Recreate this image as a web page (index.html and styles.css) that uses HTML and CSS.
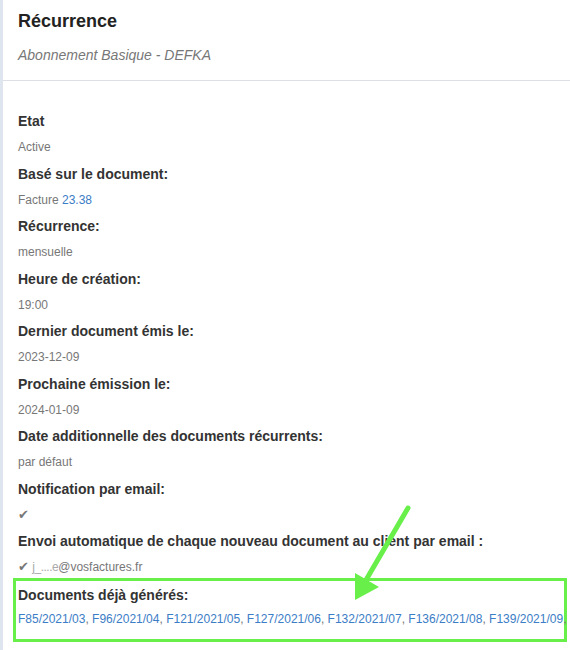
FILE: index.html
```html
<!DOCTYPE html>
<html lang="fr">
<head>
  <meta charset="UTF-8" />
  <title>Récurrence</title>
  <link rel="stylesheet" href="styles.css">
</head>
<body>
  <div class="panel">
    <div class="panel-header">
      <h2>Récurrence</h2>
      <p class="subtitle">Abonnement Basique - DEFKA</p>
    </div>

    <dl class="details">
      <dt>Etat</dt>
      <dd>Active</dd>
      <dt>Basé sur le document:</dt>
      <dd>Facture <a href="#">23.38</a></dd>
      <dt>Récurrence:</dt>
      <dd>mensuelle</dd>
      <dt>Heure de création:</dt>
      <dd>19:00</dd>
      <dt>Dernier document émis le:</dt>
      <dd>2023-12-09</dd>
      <dt>Prochaine émission le:</dt>
      <dd>2024-01-09</dd>
      <dt>Date additionnelle des documents récurrents:</dt>
      <dd>par défaut</dd>
      <dt>Notification par email:</dt>
      <dd><span class="check">&#10004;</span></dd>
      <dt>Envoi automatique de chaque nouveau document au client par email :</dt>
      <dd><span class="check">&#10004;</span> <span class="masked">j_....e</span>@vosfactures.fr</dd>
      <div class="highlight">
        <dt>Documents déjà générés:</dt>
        <dd class="doc-list">
          <a href="#">F85/2021/03</a>, <a href="#">F96/2021/04</a>, <a href="#">F121/2021/05</a>, <a href="#">F127/2021/06</a>, <a href="#">F132/2021/07</a>, <a href="#">F136/2021/08</a>, <a href="#">F139/2021/09</a>,
        </dd>
      </div>
    </dl>
  </div>

  <!-- annotation arrow -->
  <svg class="arrow" width="570" height="650" viewBox="0 0 570 650">
    <line x1="408" y1="508" x2="366" y2="580" stroke="#68ef4a" stroke-width="5" stroke-linecap="round"/>
    <polygon points="355,600 355,573 379,587" fill="#68ef4a"/>
  </svg>
</body>
</html>
```

FILE: styles.css
```css
body {
  margin: 0;
  padding: 0;
  font-family: "Liberation Sans", Arial, Helvetica, sans-serif;
  background: #ffffff;
  position: relative;
  width: 570px;
  height: 650px;
  overflow: hidden;
}

.panel {
  border-left: 3px solid #dfe5ee;
  min-height: 650px;
}

.panel-header {
  padding: 10px 15px 0 15px;
  border-bottom: 1px solid #dcdfe6;
  height: 70px;
}

.panel-header h2 {
  margin: 0;
  font-size: 18px;
  line-height: 22px;
  color: #222;
  font-weight: bold;
}

.subtitle {
  margin: 12px 0 0 0;
  font-size: 14px;
  line-height: 22px;
  font-style: italic;
  color: #777;
}

.details {
  margin: 0;
  padding: 30px 18px 0 15px;
}

.details dt {
  margin: 0 0 6px 0;
  font-size: 14px;
  line-height: 20px;
  font-weight: bold;
  color: #333;
}

.details dd {
  margin: 0 0 6.5px 0;
  font-size: 12px;
  line-height: 20px;
  color: #777;
}

.details a {
  color: #3b7dc6;
  text-decoration: none;
}

.check {
  color: #777;
  font-size: 13px;
}

.masked {
  color: #aaa;
  letter-spacing: -0.5px;
}

.highlight {
  margin: -5.5px -15px 0 -5px;
  border: 3px solid #68ef4a;
  padding: 4px 2px 10px 2px;
}

.highlight dt {
  margin-bottom: 4px;
}

.highlight dd.doc-list {
  margin: 0;
  white-space: nowrap;
}

.arrow {
  position: absolute;
  left: 0;
  top: 0;
  pointer-events: none;
}
```
